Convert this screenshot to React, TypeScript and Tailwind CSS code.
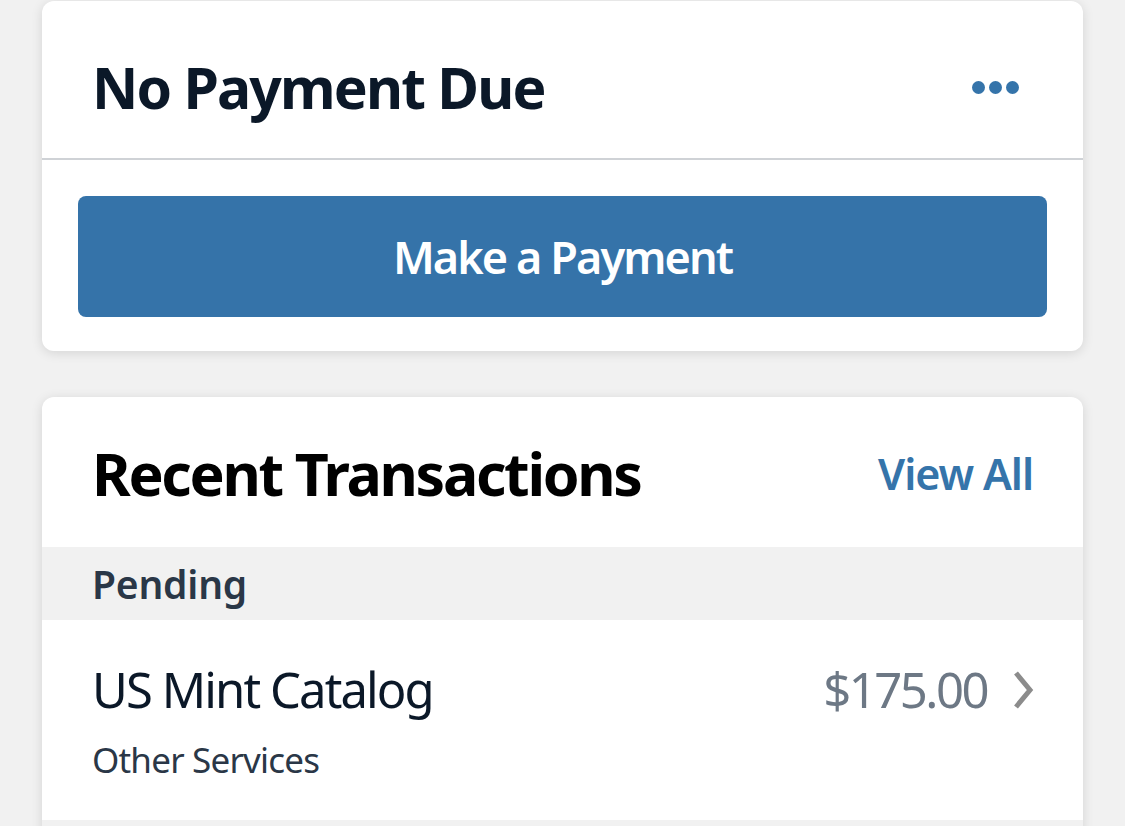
import React from "react";

export default function App() {
  return (
    <div
      className="w-[1125px] h-[826px] overflow-hidden bg-[#f1f1f1] pt-px"
      style={{ fontFamily: '"Noto Sans", "Open Sans", sans-serif' }}
    >
      <div className="mx-[42px] rounded-[12px] bg-white shadow-[0_2px_12px_rgba(0,0,0,0.12)]">
        <div className="flex h-[157px] items-center justify-between pl-[50px] pr-[64px] pt-[16px]">
          <h1 className="text-[57px] font-bold leading-none tracking-[-1.8px] text-[#0b1828]">No Payment Due</h1>
          <div className="flex gap-[4px]">
            <span className="h-[13px] w-[13px] rounded-full bg-[#3574aa]" />
            <span className="h-[13px] w-[13px] rounded-full bg-[#3574aa]" />
            <span className="h-[13px] w-[13px] rounded-full bg-[#3574aa]" />
          </div>
        </div>
        <div className="h-[2px] bg-[#cfd2d6]" />
        <div className="px-[36px] pb-[34px] pt-[36px]">
          <button className="flex h-[121px] w-full items-center justify-center rounded-[8px] bg-[#3573a9] text-[45px] font-semibold tracking-[-1.9px] text-white">
            Make a Payment
          </button>
        </div>
      </div>

      <div className="mx-[42px] mt-[46px] overflow-hidden rounded-t-[12px] bg-white shadow-[0_2px_12px_rgba(0,0,0,0.12)]">
        <div className="flex h-[150px] items-center justify-between pl-[50px] pr-[50px] pt-[2px]">
          <h2 className="text-[59px] font-bold leading-none tracking-[-2.3px] text-black">Recent Transactions</h2>
          <a className="text-[43px] font-semibold leading-none tracking-[-1.1px] text-[#3574aa]">View All</a>
        </div>
        <div className="flex h-[73px] items-center bg-[#f1f1f1] pl-[50px]">
          <span className="text-[39px] font-semibold leading-none tracking-[-0.2px] text-[#2a3747]">Pending</span>
        </div>
        <div className="flex h-[200px] items-start justify-between pl-[50px] pr-[48px]">
          <div className="flex flex-col">
            <span className="mt-[45px] text-[49px] leading-none tracking-[-1.9px] text-[#0b1828]">US Mint Catalog</span>
            <span className="mt-[28px] text-[35px] leading-none tracking-[-0.8px] text-[#2a3747]">Other Services</span>
          </div>
          <div className="mt-[45px] flex items-center gap-[24px]">
            <span className="text-[49px] leading-none tracking-[-2.5px] text-[#6d7885]">$175.00</span>
            <svg width="24" height="40" viewBox="0 0 24 40" fill="none">
              <path d="M5 3 L19 20 L5 37" stroke="#8c8c8c" strokeWidth="5" strokeLinecap="butt" strokeLinejoin="miter" />
            </svg>
          </div>
        </div>
        <div className="h-[20px] bg-[#f1f1f1]" />
      </div>
    </div>
  );
}
